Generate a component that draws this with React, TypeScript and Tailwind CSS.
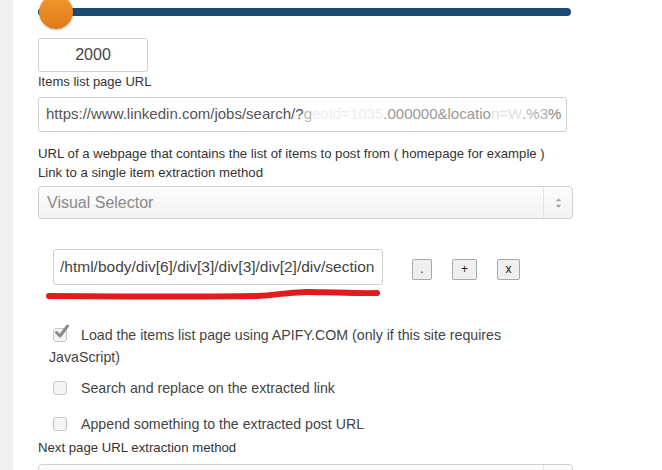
import React from "react";

function Checkbox({ checked }: { checked?: boolean }) {
  return (
    <span className="relative inline-block align-[-2px] w-[14px] h-[14px] ml-[4px] mr-[14px] rounded-[3px] border border-[#c8c8c8] bg-[#f4f4f4]">
      {checked && (
        <svg viewBox="0 0 16 16" className="absolute -top-[5px] left-[0px] w-[16px] h-[16px]">
          <path d="M2.5 8.5 L6 12 L13.5 2" fill="none" stroke="#8a8a8a" strokeWidth="3" strokeLinecap="round" strokeLinejoin="round" />
        </svg>
      )}
    </span>
  );
}

function SelectBox({ value }: { value: string }) {
  return (
    <div className="flex h-[33px] w-[535px] items-stretch rounded-[4px] border border-[#cfcfcf] bg-gradient-to-b from-[#fdfdfd] to-[#f2f2f2]">
      <div className="flex flex-1 items-center pl-[8px] text-[16px] text-[#8a8a8a]">{value}</div>
      <div className="flex w-[29px] items-center justify-center border-l border-[#e2e2e2]">
        <svg viewBox="0 0 8 14" className="w-[7px] h-[12px]">
          <path d="M1 5 L4 1.5 L7 5 Z M1 9 L4 12.5 L7 9 Z" fill="#a0a0a0" />
        </svg>
      </div>
    </div>
  );
}

function SmallButton({ label, w }: { label: string; w: string }) {
  return (
    <button className={"flex h-[21px] items-center justify-center rounded-[2px] border border-[#a8a8a8] bg-[#efefef] text-[12px] text-[#222] leading-none " + w}>
      {label}
    </button>
  );
}

export default function App() {
  return (
    <div className="flex h-[470px] w-[662px] overflow-hidden bg-white text-[#333]" style={{ fontFamily: '"Liberation Sans", Arial, sans-serif' }}>
      <div className="w-[13px] shrink-0 bg-[#f1f1f1]" />
      <div className="flex-1 pl-[25px]">
        {/* slider */}
        <div className="relative -mt-[5px] h-[33px] w-[533px]">
          <div className="absolute left-0 right-0 top-[13px] h-[8px] rounded-full bg-[#1b4b72]" />
          <div className="absolute left-[1px] top-0 h-[34px] w-[34px] rounded-full bg-gradient-to-b from-[#f39a2f] to-[#e0781a] shadow-[0_1px_2px_rgba(0,0,0,0.25)]" />
        </div>

        <div className="mt-[10px] flex h-[34px] w-[110px] items-center justify-center rounded-[3px] border border-[#cfcfcf] text-[16px] text-[#444]">
          2000
        </div>
        <div className="mt-[1px] text-[13px] leading-[18px]">Items list page URL</div>

        <div className="mt-[6px] flex h-[35px] w-[529px] items-center overflow-hidden whitespace-nowrap rounded-[3px] border border-[#cfcfcf] pl-[7px] text-[15px] text-[#555]">
          <span>https://www.linkedin.com/jobs/search/?</span>
          <span className="text-[#b8b8b8]">g</span>
          <span className="text-[#ececec]">eoId=1035</span>
          <span className="text-[#9a9a9a]">.000000&amp;locatio</span>
          <span className="text-[#e0e0e0]">n=W</span>
          <span className="text-[#b0b0b0]">.%3</span>
          <span className="text-[#888]">%</span>
        </div>

        <div className="mt-[12px] text-[13.2px] leading-[19px]">
          <div>URL of a webpage that contains the list of items to post from ( homepage for example )</div>
          <div>Link to a single item extraction method</div>
        </div>

        <div className="mt-[4px]">
          <SelectBox value="Visual Selector" />
        </div>

        <div className="mt-[30px] flex items-center pl-[15px]">
          <div className="flex h-[36px] w-[330px] items-center rounded-[3px] border border-[#cfcfcf] pl-[6px] text-[15.5px] text-[#444]">
            /html/body/div[6]/div[3]/div[3]/div[2]/div/section
          </div>
          <div className="ml-[29px] mt-[4px] flex items-center gap-[20px]">
            <SmallButton label="." w="w-[20px]" />
            <SmallButton label="+" w="w-[25px]" />
            <SmallButton label="x" w="w-[23px]" />
          </div>
        </div>

        <svg viewBox="0 0 340 14" className="ml-[7px] mt-[2px] block h-[14px] w-[336px]">
          <path d="M4 9 C 80 9.5, 160 10, 215 9 C 235 8.5, 240 5.5, 265 5 C 290 5, 310 6.5, 336 6" fill="none" stroke="#e31b1d" strokeWidth="6" strokeLinecap="round" />
        </svg>

        <div className="mt-[23px] w-[500px] pl-[11px] text-[14.2px] leading-[22px] text-[#444]">
          <div>
            <Checkbox checked />
            Load the items list page using APIFY.COM (only if this site requires JavaScript)
          </div>
          <div className="mt-[9px]">
            <Checkbox />
            Search and replace on the extracted link
          </div>
          <div className="mt-[14px]">
            <Checkbox />
            Append something to the extracted post URL
          </div>
        </div>

        <div className="mt-[4px] text-[13.2px] leading-[18px]">Next page URL extraction method</div>
        <div className="mt-[7px]">
          <SelectBox value="" />
        </div>
      </div>
    </div>
  );
}
